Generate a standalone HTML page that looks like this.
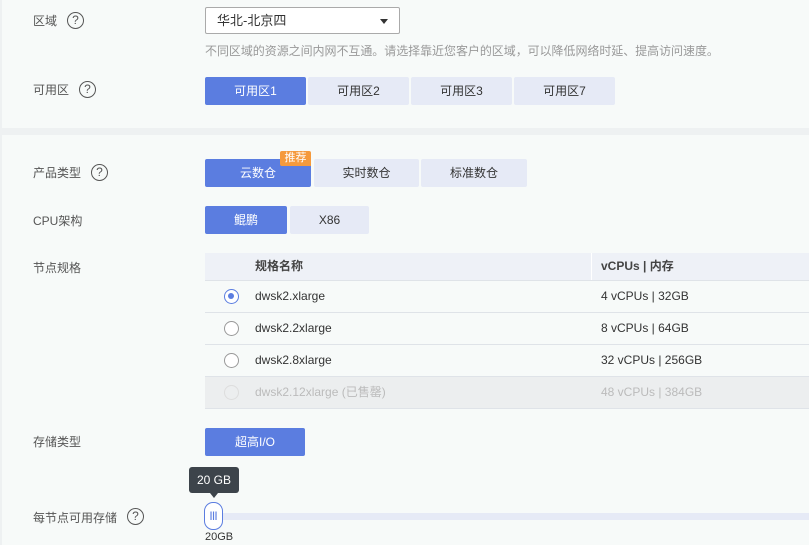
<!DOCTYPE html>
<html><head><meta charset="utf-8"><style>
body{margin:0;width:809px;height:545px;overflow:hidden;background:#eef1f2;font-family:"Liberation Sans","Noto Sans CJK SC",sans-serif;font-size:12px;color:#333;position:relative}
.p{position:absolute;left:2px;right:0;background:#f7faf9}
.a{position:absolute;white-space:nowrap}
.lab{color:#555;font-size:12px}
.q{position:absolute;width:17px;height:17px;border:1.3px solid #555;border-radius:50%;text-align:center;font-size:12px;color:#555;box-sizing:border-box;line-height:14px}
.b{position:absolute;height:28px;line-height:28px;text-align:center;background:#e6eaf6;color:#333;font-size:12px;border-radius:2px}
.on{background:#5b7de0;color:#fff}
.row{position:absolute;left:205px;right:0;height:31px;border-bottom:1px solid #dfe3e8;line-height:31px}
.r{position:absolute;left:19px;top:8px;width:15px;height:15px;border:1px solid #999;border-radius:50%;box-sizing:border-box;background:#fff}
</style></head><body>
<div class="p" style="top:0;height:128px"></div>
<div class="p" style="top:135px;height:410px"></div>
<div class="a lab" style="left:33px;top:12px">区域</div><span class="q" style="left:67px;top:12px">?</span>
<div class="a" style="left:205px;top:7px;width:195px;height:27px;border:1px solid #aaa;border-radius:2px;background:#fff;line-height:25px;padding-left:11px;box-sizing:border-box;font-size:13px">华北-北京四<span style="position:absolute;right:11px;top:11px;border:4px solid transparent;border-top:5px solid #333"></span></div>
<div class="a" style="left:205px;top:42px;color:#999;font-size:12px;letter-spacing:-0.05px">不同区域的资源之间内网不互通。请选择靠近您客户的区域，可以降低网络时延、提高访问速度。</div>
<div class="a lab" style="left:33px;top:81px">可用区</div><span class="q" style="left:79px;top:81px">?</span>
<div class="b on" style="left:205px;top:77px;width:101px">可用区1</div>
<div class="b" style="left:308px;top:77px;width:101px">可用区2</div>
<div class="b" style="left:411px;top:77px;width:101px">可用区3</div>
<div class="b" style="left:514px;top:77px;width:101px">可用区7</div>

<div class="a lab" style="left:33px;top:164px">产品类型</div><span class="q" style="left:91px;top:164px">?</span>
<div class="b on" style="left:205px;top:159px;width:106px">云数仓</div>
<div class="a" style="left:280px;top:151px;width:31px;height:15px;background:#f59a3c;color:#fff;font-size:11px;line-height:15px;text-align:center;border-radius:2px 2px 0 2px">推荐</div>
<div class="b" style="left:314px;top:159px;width:105px">实时数仓</div>
<div class="b" style="left:421px;top:159px;width:106px">标准数仓</div>
<div class="a lab" style="left:33px;top:212px">CPU架构</div>
<div class="b on" style="left:205px;top:206px;width:82px">鲲鹏</div>
<div class="b" style="left:290px;top:206px;width:79px">X86</div>
<div class="a lab" style="left:33px;top:259px">节点规格</div>
<div class="row" style="top:253px;height:27px;line-height:27px;background:#eef1f7;font-weight:bold;color:#444"><span class="a" style="left:50px">规格名称</span><span class="a" style="left:386px;top:0;width:1px;height:27px;background:#fff"></span><span class="a" style="left:396px">vCPUs | 内存</span></div>
<div class="row" style="top:281px"><span class="r" style="border-color:#5b7de0;border-width:1.5px"><span style="position:absolute;left:3px;top:3px;width:6px;height:6px;border-radius:50%;background:#5b7de0"></span></span><span class="a" style="left:50px">dwsk2.xlarge</span><span class="a" style="left:396px">4 vCPUs | 32GB</span></div>
<div class="row" style="top:313px"><span class="r"></span><span class="a" style="left:50px">dwsk2.2xlarge</span><span class="a" style="left:396px">8 vCPUs | 64GB</span></div>
<div class="row" style="top:345px"><span class="r"></span><span class="a" style="left:50px">dwsk2.8xlarge</span><span class="a" style="left:396px">32 vCPUs | 256GB</span></div>
<div class="row" style="top:377px;background:#eceeef;color:#bbb"><span class="r" style="border-color:#ddd;background:#eceeef"></span><span class="a" style="left:50px">dwsk2.12xlarge (已售罄)</span><span class="a" style="left:396px">48 vCPUs | 384GB</span></div>
<div class="a lab" style="left:33px;top:433px">存储类型</div>
<div class="b on" style="left:205px;top:428px;width:100px">超高I/O</div>
<div class="a" style="left:189px;top:467px;width:50px;height:26px;background:#3d444b;color:#fff;border-radius:3px;line-height:26px;text-align:center;font-size:12px">20 GB</div>
<div class="a" style="left:210px;top:493px;border:4px solid transparent;border-top:5px solid #3d444b"></div>
<div class="a lab" style="left:33px;top:509px">每节点可用存储</div><span class="q" style="left:127px;top:508px">?</span>
<div class="a" style="left:214px;top:513px;right:0;height:7px;background:#e6eaf6"></div>
<div class="a" style="left:204px;top:502px;width:19px;height:28px;border:1.5px solid #5b7de0;border-radius:9px;background:#fff;box-sizing:border-box;text-align:center;line-height:24px;color:#5b7de0;font-size:9px;font-weight:bold">|||</div>
<div class="a" style="left:205px;top:531px;font-size:11px">20GB</div>
</body></html>
